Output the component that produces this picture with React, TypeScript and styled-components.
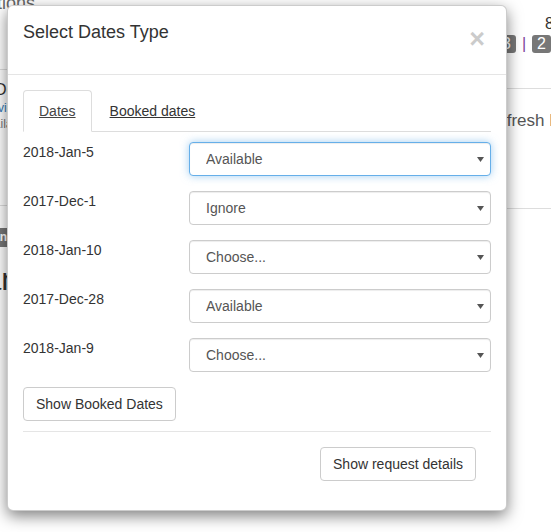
import React from "react";
import styled, { createGlobalStyle } from "styled-components";

const GlobalStyle = createGlobalStyle`
  html, body { margin: 0; padding: 0; background: #fff; }
  body {
    font-family: "Liberation Sans", Arial, Helvetica, sans-serif;
    font-size: 14px;
    line-height: 1.42857;
    color: #333;
  }
  * { box-sizing: border-box; }
`;

/* ---------- background page ---------- */

const Page = styled.div`
  position: relative;
  width: 551px;
  height: 532px;
  overflow: hidden;
  display: flex;
  justify-content: space-between;
`;

const SidePanel = styled.aside`
  width: 160px;
  flex: none;
  white-space: nowrap;
`;

const SideHeading = styled.div`
  margin: -7px 0 0 -3px;
  height: 77px;
  border-bottom: 1px solid #ddd;
  font-size: 18px;
  line-height: 20px;
  color: #666;
`;

const SideItem = styled.div`
  height: 136px;
  padding-top: 10px;
  border-bottom: 1px solid #ddd;
`;

const ItemTitle = styled.div`
  margin-left: -5px;
  font-size: 16px;
  line-height: 20px;
  color: #333;
`;

const ItemLink = styled.a`
  display: block;
  margin-left: -2px;
  font-size: 12px;
  line-height: 16px;
  color: #337ab7;
`;

const ItemMeta = styled.div`
  margin-left: -20px;
  font-size: 12px;
  line-height: 16px;
  color: #777;
`;

const StatusLabel = styled.span`
  display: inline-block;
  margin: 22px 0 0 -31px;
  padding: 3px 6px;
  background: #777;
  color: #fff;
  font-size: 12px;
  font-weight: bold;
  line-height: 13px;
  border-radius: 3px;
`;

const BigHeading = styled.h2`
  margin: 12px 0 0 -45px;
  font-size: 32px;
  font-weight: 500;
  line-height: 40px;
  color: #333;
`;

const RightPanel = styled.div`
  width: 61px;
  flex: none;
  white-space: nowrap;
`;

const RightHeader = styled.div`
  height: 89px;
  border-bottom: 1px solid #ddd;
  padding-top: 14px;
`;

const Count = styled.div`
  padding-left: 55px;
  font-size: 16px;
  line-height: 20px;
  color: #333;
`;

const BadgeRow = styled.div`
  display: flex;
  align-items: center;
  margin-top: 1px;
  padding-left: 7px;
`;

const Badge = styled.span`
  display: inline-block;
  padding: 0 5px;
  background: #777;
  color: #fff;
  font-size: 16px;
  line-height: 18px;
  border-radius: 3px;
`;

const Separator = styled.span`
  margin: 0 6px;
  font-size: 16px;
  line-height: 18px;
  color: #7d3c98;
`;

const RightSection = styled.div`
  height: 120px;
  border-bottom: 1px solid #ddd;
  padding-top: 22px;
`;

const RefreshText = styled.div`
  margin-left: -5px;
  font-size: 17px;
  line-height: 20px;
  color: #555;
`;

/* ---------- modal ---------- */

const Modal = styled.div`
  position: absolute;
  left: 7px;
  top: 5px;
  width: 500px;
  background: #fff;
  border: 1px solid rgba(0, 0, 0, 0.2);
  border-radius: 6px;
  box-shadow: 0 5px 15px rgba(0, 0, 0, 0.5);
`;

const Header = styled.div`
  display: flex;
  justify-content: space-between;
  align-items: flex-start;
  height: 69px;
  padding: 14px 15px 0;
  border-bottom: 1px solid #e5e5e5;
`;

const Title = styled.h4`
  margin: 0;
  font-size: 18px;
  font-weight: 500;
  line-height: 1.42857;
  color: #333;
`;

const Close = styled.button`
  margin: 6px 6px 0 0;
  padding: 0;
  background: none;
  border: 0;
  font-family: "Liberation Sans", Arial, sans-serif;
  font-size: 27px;
  font-weight: bold;
  line-height: 1;
  color: #000;
  opacity: 0.2;
  cursor: pointer;
`;

const Body = styled.div`
  padding: 15px 15px 14px;
`;

const Tabs = styled.ul`
  display: flex;
  margin: 0;
  padding: 0;
  list-style: none;
  border-bottom: 1px solid #ddd;
`;

const TabItem = styled.li`
  margin: 0 2px -1px 0;
`;

const TabLink = styled.a<{ $active?: boolean }>`
  display: block;
  padding: 10px 15px;
  line-height: 20px;
  border: 1px solid transparent;
  border-radius: 4px 4px 0 0;
  color: #333;
  text-decoration: underline;
  cursor: pointer;
  ${(p) =>
    p.$active &&
    `
    border-color: #ddd #ddd transparent;
    background: #fff;
    color: #444;
  `}
`;

const TabContent = styled.div`
  margin-top: 10px;
`;

const FormRow = styled.div`
  display: grid;
  grid-template-columns: 136px 1fr;
  column-gap: 30px;
  margin-bottom: 15px;
`;

const DateLabel = styled.label`
  font-size: 14px;
  line-height: 20px;
  color: #333;
`;

const SelectWrap = styled.div`
  position: relative;
`;

const Select = styled.select<{ $focused?: boolean }>`
  display: block;
  width: 100%;
  height: 34px;
  padding: 6px 28px 6px 16px;
  appearance: none;
  -webkit-appearance: none;
  background: #fff;
  border: 1px solid ${(p) => (p.$focused ? "#66afe9" : "#ccc")};
  border-radius: 4px;
  font-family: "Liberation Sans", Arial, sans-serif;
  font-size: 14px;
  line-height: 20px;
  color: #555;
  outline: none;
  box-shadow: ${(p) =>
    p.$focused
      ? "inset 0 1px 1px rgba(0,0,0,.075), 0 0 8px rgba(102,175,233,.6)"
      : "inset 0 1px 1px rgba(0,0,0,.075)"};
`;

const Caret = styled.svg`
  position: absolute;
  right: 7px;
  top: 15px;
  width: 7px;
  height: 5px;
  pointer-events: none;
`;

const Button = styled.button`
  display: inline-block;
  padding: 6px 12px;
  background: #fff;
  border: 1px solid #ccc;
  border-radius: 4px;
  font-family: "Liberation Sans", Arial, sans-serif;
  font-size: 14px;
  line-height: 20px;
  color: #333;
  cursor: pointer;
`;

const Footer = styled.div`
  display: flex;
  justify-content: flex-end;
  margin-top: 10px;
  padding: 15px;
  border-top: 1px solid #e5e5e5;
`;

const rows = [
  { date: "2018-Jan-5", value: "Available", focused: true },
  { date: "2017-Dec-1", value: "Ignore" },
  { date: "2018-Jan-10", value: "Choose..." },
  { date: "2017-Dec-28", value: "Available" },
  { date: "2018-Jan-9", value: "Choose..." },
];

const options = ["Choose...", "Available", "Booked", "Ignore"];

export default function App() {
  return (
    <>
      <GlobalStyle />
      <Page>
        <SidePanel>
          <SideHeading>tions</SideHeading>
          <SideItem>
            <ItemTitle>Double Room</ItemTitle>
            <ItemLink>view</ItemLink>
            <ItemMeta>Available</ItemMeta>
          </SideItem>
          <StatusLabel>Finance</StatusLabel>
          <BigHeading>Planning</BigHeading>
        </SidePanel>
        <RightPanel>
          <RightHeader>
            <Count>8</Count>
            <BadgeRow>
              <Badge>3</Badge>
              <Separator>|</Separator>
              <Badge>2</Badge>
            </BadgeRow>
          </RightHeader>
          <RightSection>
            <RefreshText>Refresh List</RefreshText>
          </RightSection>
        </RightPanel>

        <Modal role="dialog">
          <Header>
            <Title>Select Dates Type</Title>
            <Close aria-label="Close">×</Close>
          </Header>
          <Body>
            <Tabs>
              <TabItem>
                <TabLink $active>Dates</TabLink>
              </TabItem>
              <TabItem>
                <TabLink>Booked dates</TabLink>
              </TabItem>
            </Tabs>
            <TabContent>
              {rows.map((r) => (
                <FormRow key={r.date}>
                  <DateLabel>{r.date}</DateLabel>
                  <SelectWrap>
                    <Select defaultValue={r.value} $focused={r.focused}>
                      {options.map((o) => (
                        <option key={o} value={o}>
                          {o}
                        </option>
                      ))}
                    </Select>
                    <Caret viewBox="0 0 7 5">
                      <polygon points="0,0 7,0 3.5,5" fill="#555" />
                    </Caret>
                  </SelectWrap>
                </FormRow>
              ))}
              <Button>Show Booked Dates</Button>
              <Footer>
                <Button>Show request details</Button>
              </Footer>
            </TabContent>
          </Body>
        </Modal>
      </Page>
    </>
  );
}
